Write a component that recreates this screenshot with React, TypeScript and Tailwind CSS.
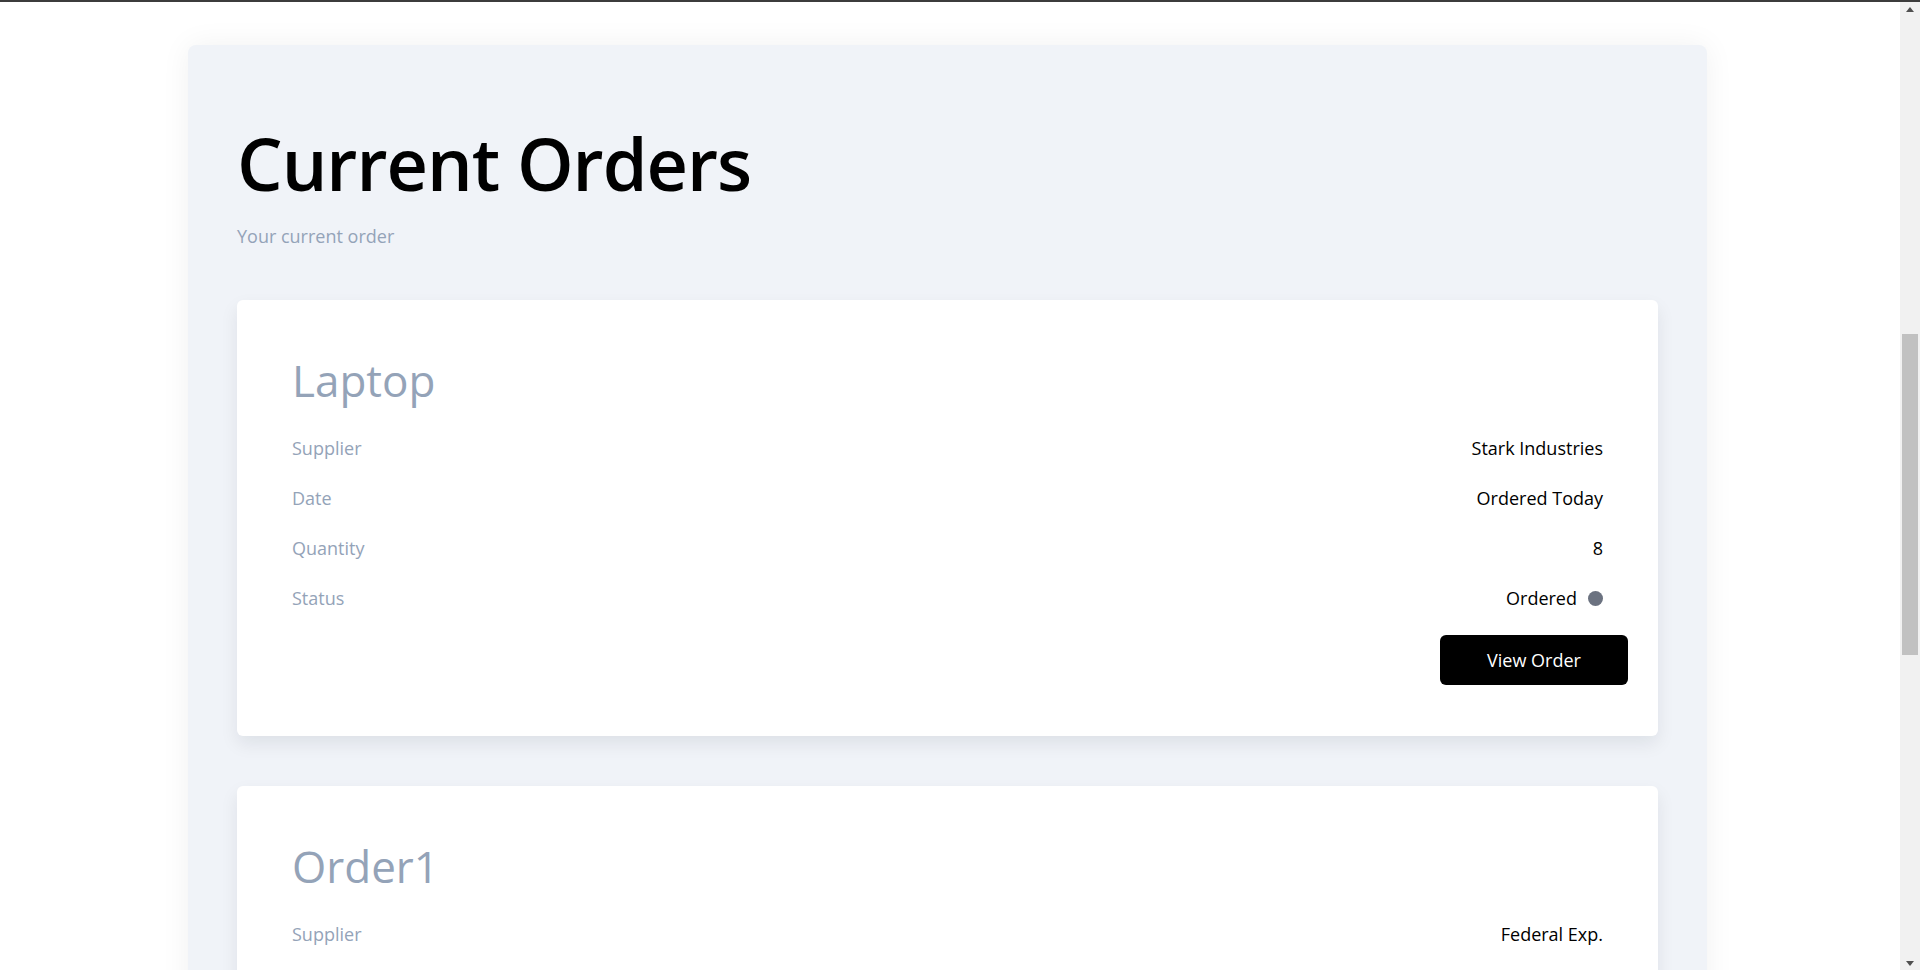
import React from 'react';

type Order = {
  name: string;
  supplier: string;
  date: string;
  quantity: number;
  status: string;
};

const orders: Order[] = [
  { name: 'Laptop', supplier: 'Stark Industries', date: 'Ordered Today', quantity: 8, status: 'Ordered' },
  { name: 'Order1', supplier: 'Federal Exp.', date: 'Ordered Yesterday', quantity: 3, status: 'Shipped' },
];

const Row = ({ label, children }: { label: string; children: React.ReactNode }) => (
  <div className="flex h-[50px] items-center justify-between">
    <span className="text-[#94a3b8]">{label}</span>
    <span className="flex items-center text-black">{children}</span>
  </div>
);

const OrderCard = ({ order }: { order: Order }) => (
  <div className="rounded-md bg-white px-[30px] pb-[51px] pt-[58px] shadow-[0_8px_18px_rgba(15,23,42,0.08)]">
    <div className="px-[25px]">
      <h3 className="text-[44px] leading-none font-normal text-[#94a3b8]">{order.name}</h3>
      <div className="mt-[21px] text-[18px] leading-[1.5]">
        <Row label="Supplier">{order.supplier}</Row>
        <Row label="Date">{order.date}</Row>
        <Row label="Quantity">{order.quantity}</Row>
        <Row label="Status">
          {order.status}
          <span className="ml-[11px] inline-block h-[15px] w-[15px] rounded-full bg-[#6b7280]" />
        </Row>
      </div>
    </div>
    <div className="mt-[12px] flex justify-end">
      <button className="h-[50px] w-[188px] rounded-md bg-black text-[18px] text-white">View Order</button>
    </div>
  </div>
);

// fake browser scrollbar, the page in the shot is scrolled part way down
const ScrollBar = () => (
  <div className="flex w-[20px] flex-col bg-[#f1f1f1]">
    <div className="flex h-[14px] items-center justify-center">
      <svg width="8" height="5" viewBox="0 0 8 5"><path d="M0 5 L4 0 L8 5 Z" fill="#505050" /></svg>
    </div>
    <div className="mx-[2px] mt-[318px] h-[321px] bg-[#c1c1c1]" />
    <div className="flex-1" />
    <div className="flex h-[14px] items-center justify-center">
      <svg width="8" height="5" viewBox="0 0 8 5"><path d="M0 0 L8 0 L4 5 Z" fill="#505050" /></svg>
    </div>
  </div>
);

export default function App() {
  return (
    <div
      className="flex h-screen overflow-hidden border-t-2 border-[#3c3c3c] bg-white"
      style={{ fontFamily: '"Open Sans", "Noto Sans", sans-serif' }}
    >
      <main className="flex-1 overflow-hidden pl-[188px] pt-[43px]">
        <div className="w-[1519px] rounded-lg bg-[#f0f3f8] px-[49px] pt-[82px] shadow-[0_0_30px_rgba(15,23,42,0.06)]">
          <h1 className="text-[72px] leading-none font-semibold tracking-[-1px] text-black">Current Orders</h1>
          <p className="mt-[24px] text-[18px] leading-[1.5] text-[#94a3b8]">Your current order</p>
          <div className="mt-[50px] flex flex-col gap-[50px] pb-12">
            {orders.map((o) => (
              <OrderCard key={o.name} order={o} />
            ))}
          </div>
        </div>
      </main>
      <ScrollBar />
    </div>
  );
}
